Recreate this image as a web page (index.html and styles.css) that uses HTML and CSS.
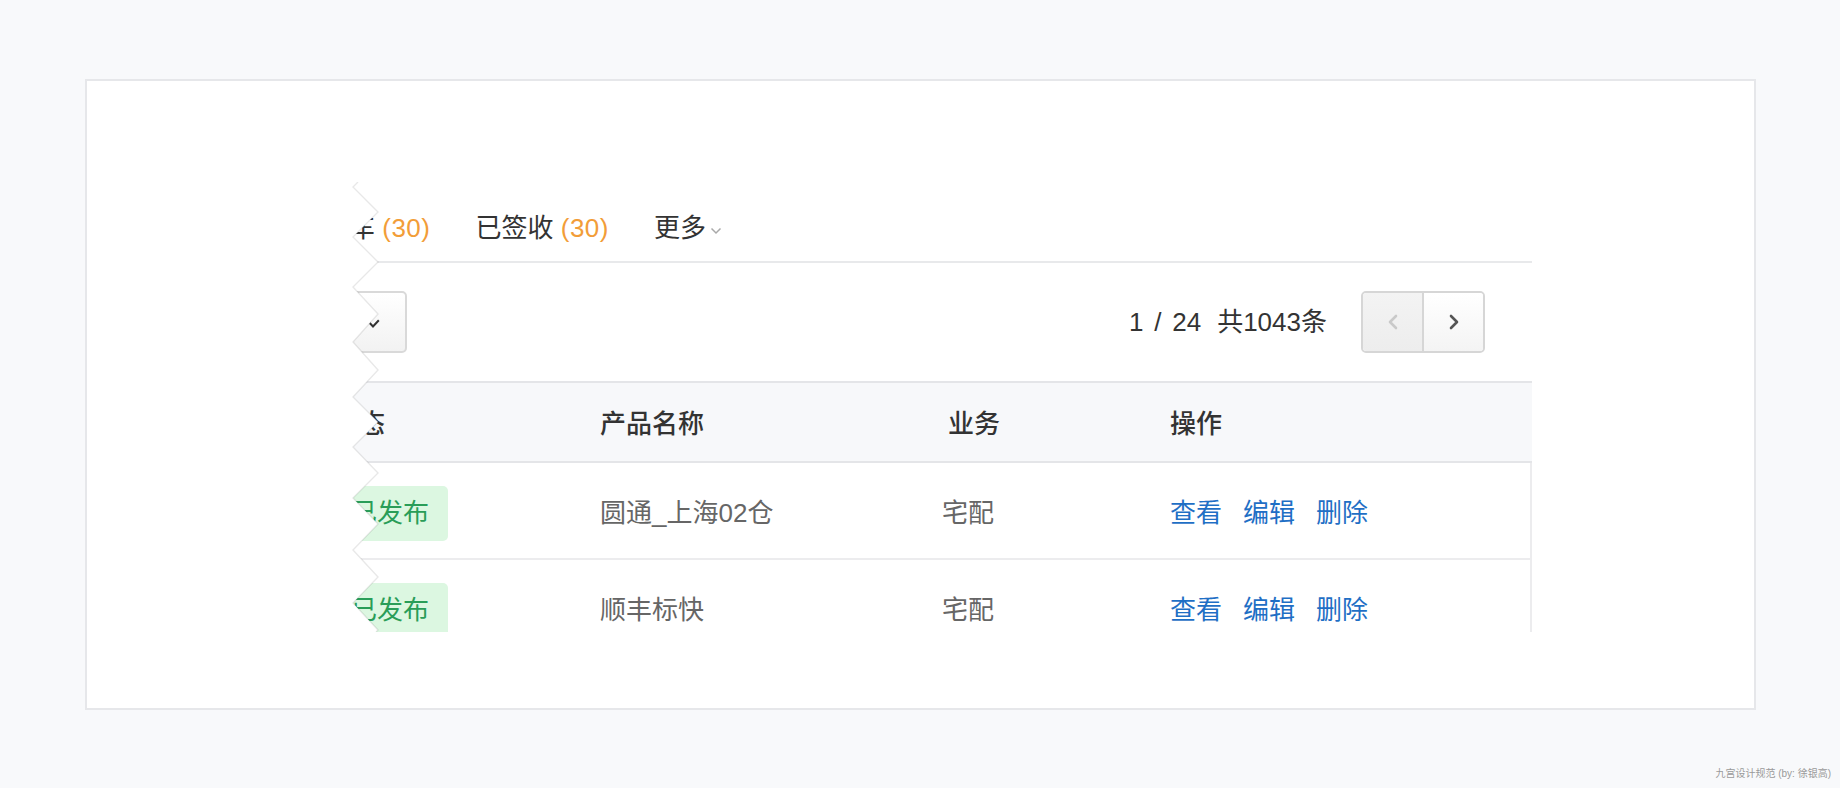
FILE: index.html
```html
<!DOCTYPE html>
<html lang="zh-CN">
<head>
<meta charset="utf-8">
<title>Table snippet</title>
<link rel="stylesheet" href="styles.css">
</head>
<body>
<div class="page">
  <div class="card">
    <div class="snippet">
      <div class="sheet">
        <div class="tabs">
          <div class="tab">已发车 <span class="count">(30)</span></div>
          <div class="tab">已签收 <span class="count">(30)</span></div>
          <div class="tab more">更多<svg class="caret" viewBox="0 0 12 8" width="12" height="8"><polyline points="1.5,1.5 6,6 10.5,1.5"/></svg></div>
        </div>
        <div class="toolbar">
          <button class="select" type="button"><svg class="down" viewBox="0 0 14 9" width="14" height="9"><polyline points="1.2,1.2 7,7.5 12.8,1.2"/></svg></button>
          <div class="pagination">
            <span class="pageinfo">1 / 24</span>
            <span class="total">共1043条</span>
            <div class="pager">
              <button class="pg prev" type="button" disabled><svg viewBox="0 0 10 16" width="10" height="16"><polyline points="8,2 2,8 8,14"/></svg></button>
              <button class="pg next" type="button"><svg viewBox="0 0 10 16" width="10" height="16"><polyline points="2,2 8,8 2,14"/></svg></button>
            </div>
          </div>
        </div>
        <div class="table">
          <div class="grid thead">
            <div>状态</div>
            <div>产品名称</div>
            <div class="biz-h">业务</div>
            <div>操作</div>
          </div>
          <div class="grid trow">
            <div><span class="tag">已发布</span></div>
            <div>圆通_上海02仓</div>
            <div>宅配</div>
            <div class="ops"><a>查看</a><a>编辑</a><a>删除</a></div>
          </div>
          <div class="grid trow">
            <div><span class="tag">已发布</span></div>
            <div>顺丰标快</div>
            <div>宅配</div>
            <div class="ops"><a>查看</a><a>编辑</a><a>删除</a></div>
          </div>
        </div>
      </div>
      <svg class="tear" viewBox="0 0 120 450" width="120" height="450"><polyline points="78,0 73,5 98,30 73,55 98,80 73,105 98,132 73,160 98,188 73,215 98,240 73,265 98,291 73,316 98,342 73,368 98,395 73,421 98,448 96,450"/></svg>
    </div>
  </div>
  <div class="credit">九宫设计规范 (by: 徐银高)</div>
</div>
</body>
</html>
```

FILE: styles.css
```css
* {
  box-sizing: border-box;
}

body {
  margin: 0;
  background: #f8f9fb;
  font-family: "Liberation Sans", "Noto Sans CJK SC", sans-serif;
}

.page {
  width: 1840px;
  height: 788px;
  padding: 79px 0 0 85px;
}

.card {
  width: 1671px;
  height: 631px;
  border: 2px solid #e6e7ea;
  background: #fff;
}

.snippet {
  position: relative;
  width: 1252px;
  height: 450px;
  margin: 101px 0 0 193px;
}

.sheet {
  height: 100%;
  overflow: hidden;
  background: #fff;
  clip-path: polygon(78px 0, 100% 0, 100% 100%, 96px 450px, 98px 448px, 73px 421px, 98px 395px, 73px 368px, 98px 342px, 73px 316px, 98px 291px, 73px 265px, 98px 240px, 73px 215px, 98px 188px, 73px 160px, 98px 132px, 73px 105px, 98px 80px, 73px 55px, 98px 30px, 73px 5px);
}

.tear {
  position: absolute;
  left: 0;
  top: 0;
  fill: none;
  stroke: rgba(0, 0, 0, 0.09);
  stroke-width: 1.4;
}

/* tabs */
.tabs {
  display: flex;
  align-items: center;
  gap: 45px;
  height: 81px;
  padding: 13px 0 0 17px;
  border-bottom: 2px solid #e8e9eb;
  font-size: 26px;
  line-height: 36px;
  color: #333;
}

.tab {
  display: flex;
  align-items: center;
  white-space: pre;
}

.count {
  color: #f29d38;
  letter-spacing: 0.5px;
}

.caret {
  margin: 6px 0 0 4px;
  fill: none;
  stroke: #a9a9a9;
  stroke-width: 1.5;
}

/* toolbar */
.toolbar {
  display: flex;
  align-items: center;
  justify-content: space-between;
  height: 118px;
  padding: 0 47px 0 10px;
}

.select {
  display: flex;
  align-items: center;
  justify-content: flex-end;
  width: 117px;
  height: 62px;
  padding: 2px 25px 0 0;
  border: 2px solid #d9d9d9;
  border-radius: 5px;
  background: linear-gradient(#ffffff, #f2f2f2);
}

.down {
  fill: none;
  stroke: #333;
  stroke-width: 2;
}

.pagination {
  display: flex;
  align-items: center;
  font-size: 26px;
  line-height: 36px;
  color: #333;
}

.pageinfo {
  margin-right: 16px;
  word-spacing: 3.5px;
}

.pager {
  display: flex;
  width: 124px;
  height: 62px;
  margin-left: 34px;
  border: 2px solid #d6d6d6;
  border-radius: 5px;
  overflow: hidden;
}

.pg {
  flex: 1;
  display: flex;
  align-items: center;
  justify-content: center;
  border: 0;
  padding: 0;
}

.pg svg {
  fill: none;
  stroke-width: 2.6;
  stroke-linecap: round;
  stroke-linejoin: round;
}

.prev {
  background: linear-gradient(#f3f3f3, #ededed);
  border-right: 2px solid #d6d6d6;
}

.prev svg {
  stroke: #c9c9c9;
}

.next {
  background: linear-gradient(#ffffff, #f4f4f4);
}

.next svg {
  stroke: #555;
}

/* table */
.grid {
  display: grid;
  grid-template-columns: 267px 342px 228px 1fr;
  align-items: center;
  padding-left: 53px;
  font-size: 26px;
  line-height: 36px;
}

.thead {
  height: 82px;
  padding-top: 4px;
  border-top: 2px solid #e4e5e8;
  border-bottom: 2px solid #e4e5e8;
  background: #f7f8fa;
  color: #333;
  font-weight: 500;
}

.biz-h {
  padding-left: 6px;
}

.trow {
  height: 97px;
  padding-top: 5px;
  border-bottom: 2px solid #ececee;
  border-right: 2px solid #ececee;
  color: #666;
}

.tag {
  display: inline-flex;
  align-items: center;
  height: 55px;
  padding: 0 19px 0 18px;
  border-radius: 5px;
  background: #dcf7e1;
  color: #2a9d58;
}

.ops {
  display: flex;
  gap: 21px;
  color: #1f6fc5;
}

.credit {
  margin-top: 57px;
  padding-right: 9px;
  text-align: right;
  font-size: 10px;
  line-height: 14px;
  color: #9a9a9a;
}
```
